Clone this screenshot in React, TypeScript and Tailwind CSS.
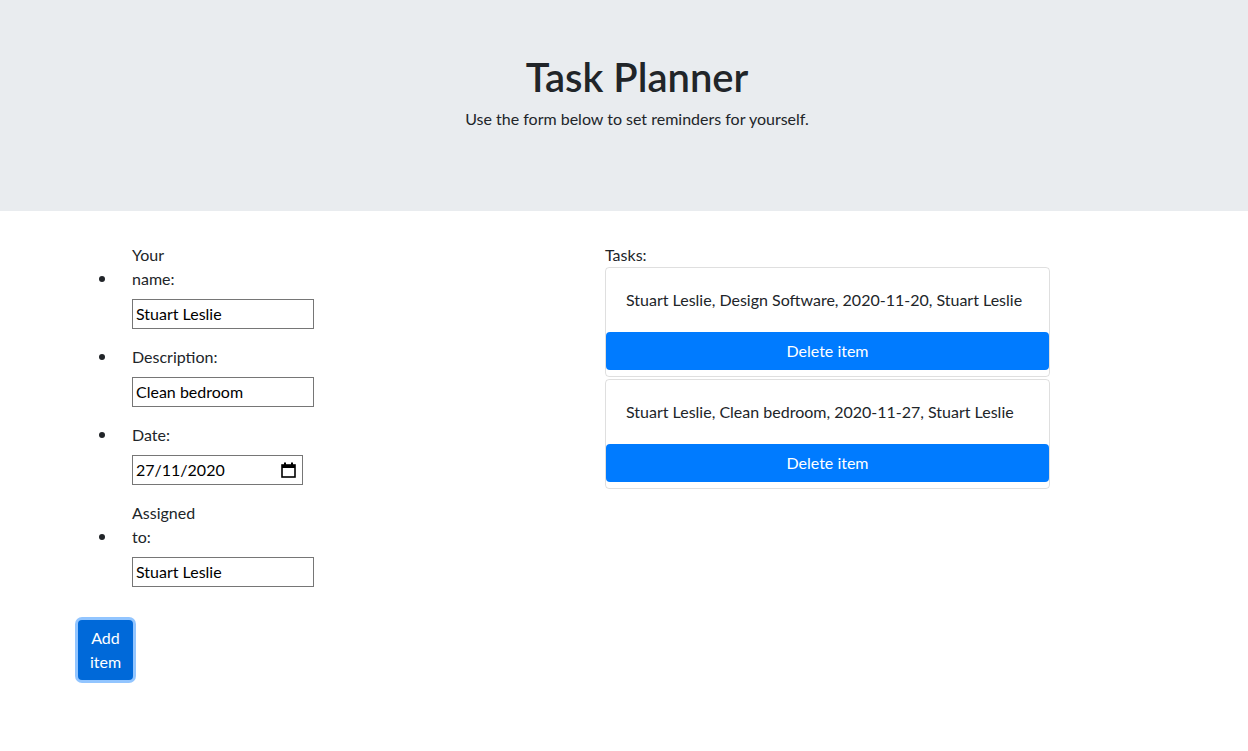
const tasks = [
  "Stuart Leslie, Design Software, 2020-11-20, Stuart Leslie",
  "Stuart Leslie, Clean bedroom, 2020-11-27, Stuart Leslie",
];

function Field({ label, children }: { label: string; children: React.ReactNode }) {
  return (
    <li className="flex flex-col">
      <div className="flex items-end">
        <span className="ml-[21px] mb-[9px] w-[6px] h-[6px] rounded-full bg-[#212529]" />
        <label className="ml-[27px] w-[70px] leading-6">{label}</label>
      </div>
      <div className="ml-[54px] mt-2">{children}</div>
    </li>
  );
}

function TextBox({ value }: { value: string }) {
  return (
    <div className="w-[182px] h-[30px] border border-[#767676] px-[3px] flex items-center text-black">
      {value}
    </div>
  );
}

export default function App() {
  return (
    <div className="min-h-screen bg-white text-[#212529] text-base" style={{ fontFamily: "Lato, 'Open Sans', sans-serif" }}>
      <div className="h-[211px] bg-[#e9ecef] flex flex-col items-center pt-[53px] pl-[26px]">
        <h1 className="text-[40px] leading-[48px] font-semibold">Task Planner</h1>
        <p className="mt-[6px] leading-6">Use the form below to set reminders for yourself.</p>
      </div>

      <div className="flex pt-8">
        {/* form */}
        <div className="w-[605px] pl-[78px]">
          <ul className="flex flex-col gap-4">
            <Field label="Your name:">
              <TextBox value="Stuart Leslie" />
            </Field>
            <Field label="Description:">
              <TextBox value="Clean bedroom" />
            </Field>
            <Field label="Date:">
              <div className="w-[171px] h-[30px] border border-[#767676] pl-[3px] pr-[6px] flex items-center justify-between text-black">
                <span>27/11/2020</span>
                <svg width="15" height="16" viewBox="0 0 15 16" fill="none">
                  <rect x="1" y="3" width="13" height="12" stroke="black" strokeWidth="1.6" />
                  <rect x="1" y="3" width="13" height="3" fill="black" />
                  <rect x="3" y="0.5" width="2" height="3" fill="black" />
                  <rect x="10" y="0.5" width="2" height="3" fill="black" />
                </svg>
              </div>
            </Field>
            <Field label="Assigned to:">
              <TextBox value="Stuart Leslie" />
            </Field>
          </ul>
          <button className="mt-[33px] w-[55px] px-3 py-1.5 leading-6 text-white bg-[#0069d9] rounded ring-[3px] ring-[#92c5ff]">
            Add item
          </button>
        </div>

        {/* tasks */}
        <div className="w-[445px]">
          <div className="leading-6">Tasks:</div>
          <div className="flex flex-col gap-[2px]">
            {tasks.map((t) => (
              <div key={t} className="border border-[rgba(0,0,0,0.125)] rounded pb-[6px]">
                <p className="p-5 leading-6">{t}</p>
                <button className="w-full h-[38px] bg-[#007bff] text-white rounded leading-6">Delete item</button>
              </div>
            ))}
          </div>
        </div>
      </div>
    </div>
  );
}
